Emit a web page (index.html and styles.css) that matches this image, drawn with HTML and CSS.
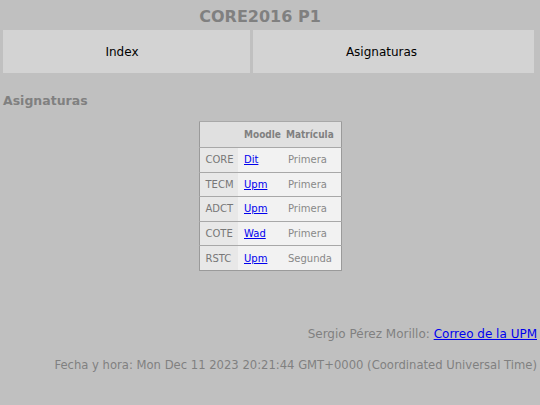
FILE: index.html
```html
<!DOCTYPE html>
<html lang="es">
<head>
<meta charset="utf-8">
<title>CORE2016 P1</title>
<link rel="stylesheet" href="styles.css">
</head>
<body>
<h1 class="title">CORE2016 P1</h1>
<nav class="nav">
  <div class="nav-item nav-left">Index</div>
  <div class="nav-item nav-right">Asignaturas</div>
</nav>
<h2 class="section">Asignaturas</h2>
<table class="subjects">
  <thead>
    <tr><th class="c1"></th><th class="c2">Moodle</th><th class="c3">Matrícula</th></tr>
  </thead>
  <tbody>
    <tr><th>CORE</th><td><a href="#">Dit</a></td><td>Primera</td></tr>
    <tr><th>TECM</th><td><a href="#">Upm</a></td><td>Primera</td></tr>
    <tr><th>ADCT</th><td><a href="#">Upm</a></td><td>Primera</td></tr>
    <tr><th>COTE</th><td><a href="#">Wad</a></td><td>Primera</td></tr>
    <tr><th>RSTC</th><td><a href="#">Upm</a></td><td>Segunda</td></tr>
  </tbody>
</table>
<footer class="footer">
  <p class="author">Sergio Pérez Morillo: <a href="#">Correo de la UPM</a></p>
  <p class="date">Fecha y hora: Mon Dec 11 2023 20:21:44 GMT+0000 (Coordinated Universal Time)</p>
</footer>
</body>
</html>
```

FILE: styles.css
```css
html, body {
  margin: 0;
  padding: 0;
  background: #c0c0c0;
  font-family: "DejaVu Sans", sans-serif;
}
.title {
  margin: 0;
  height: 30px;
  line-height: 33px;
  padding-right: 20px;
  text-align: center;
  font-size: 16px;
  font-weight: bold;
  color: #808080;
}
.nav {
  display: flex;
  gap: 3px;
  padding: 0 6px 0 3px;
}
.nav-item {
  height: 43px;
  display: flex;
  align-items: center;
  justify-content: center;
  background: #d3d3d3;
  font-size: 12px;
  color: #000;
}
.nav-left { width: 247px; padding-right: 9px; box-sizing: border-box; }
.nav-right { flex: 1; padding-right: 24px; }
.section {
  margin: 18px 0 0 0;
  padding-left: 3px;
  font-size: 12.5px;
  font-weight: bold;
  color: #808080;
  height: 20px;
  line-height: 20px;
}
.subjects {
  margin: 10px auto 0;
  border-collapse: collapse;
  border: 1px solid #9a9a9a;
  font-size: 10px;
  color: #888;
  table-layout: fixed;
}
.c1 { width: 39px; }
.c2 { width: 45px; }
.c3 { width: 58px; }
.subjects th, .subjects td {
  height: 24.6px;
  padding: 0 0 0 6px;
  border-top: 1px solid #a8a8a8;
  text-align: left;
  white-space: nowrap;
  box-sizing: border-box;
}
.subjects thead th {
  background: #e0e0e0;
  color: #808080;
  font-family: "DejaVu Sans Condensed", "DejaVu Sans", sans-serif;
  font-size: 10px;
  font-weight: bold;
  height: 26px;
}
.subjects thead th.c3 { padding-left: 3px; }
.subjects tbody th {
  background: #e8e8e8;
  color: #777;
  font-weight: normal;
}
.subjects td {
  background: #f2f2f2;
}
.subjects td + td { padding-left: 5px; }
.subjects a {
  color: #0000ee;
  text-decoration: underline;
}
.footer {
  margin-top: 51px;
  padding-right: 3px;
  text-align: right;
  color: #808080;
  font-size: 11.6px;
}
.footer p {
  margin: 0;
  line-height: 24px;
}
.author { margin-bottom: 7px !important; font-size: 12px; }
.footer a { color: #0000ee; }
```
